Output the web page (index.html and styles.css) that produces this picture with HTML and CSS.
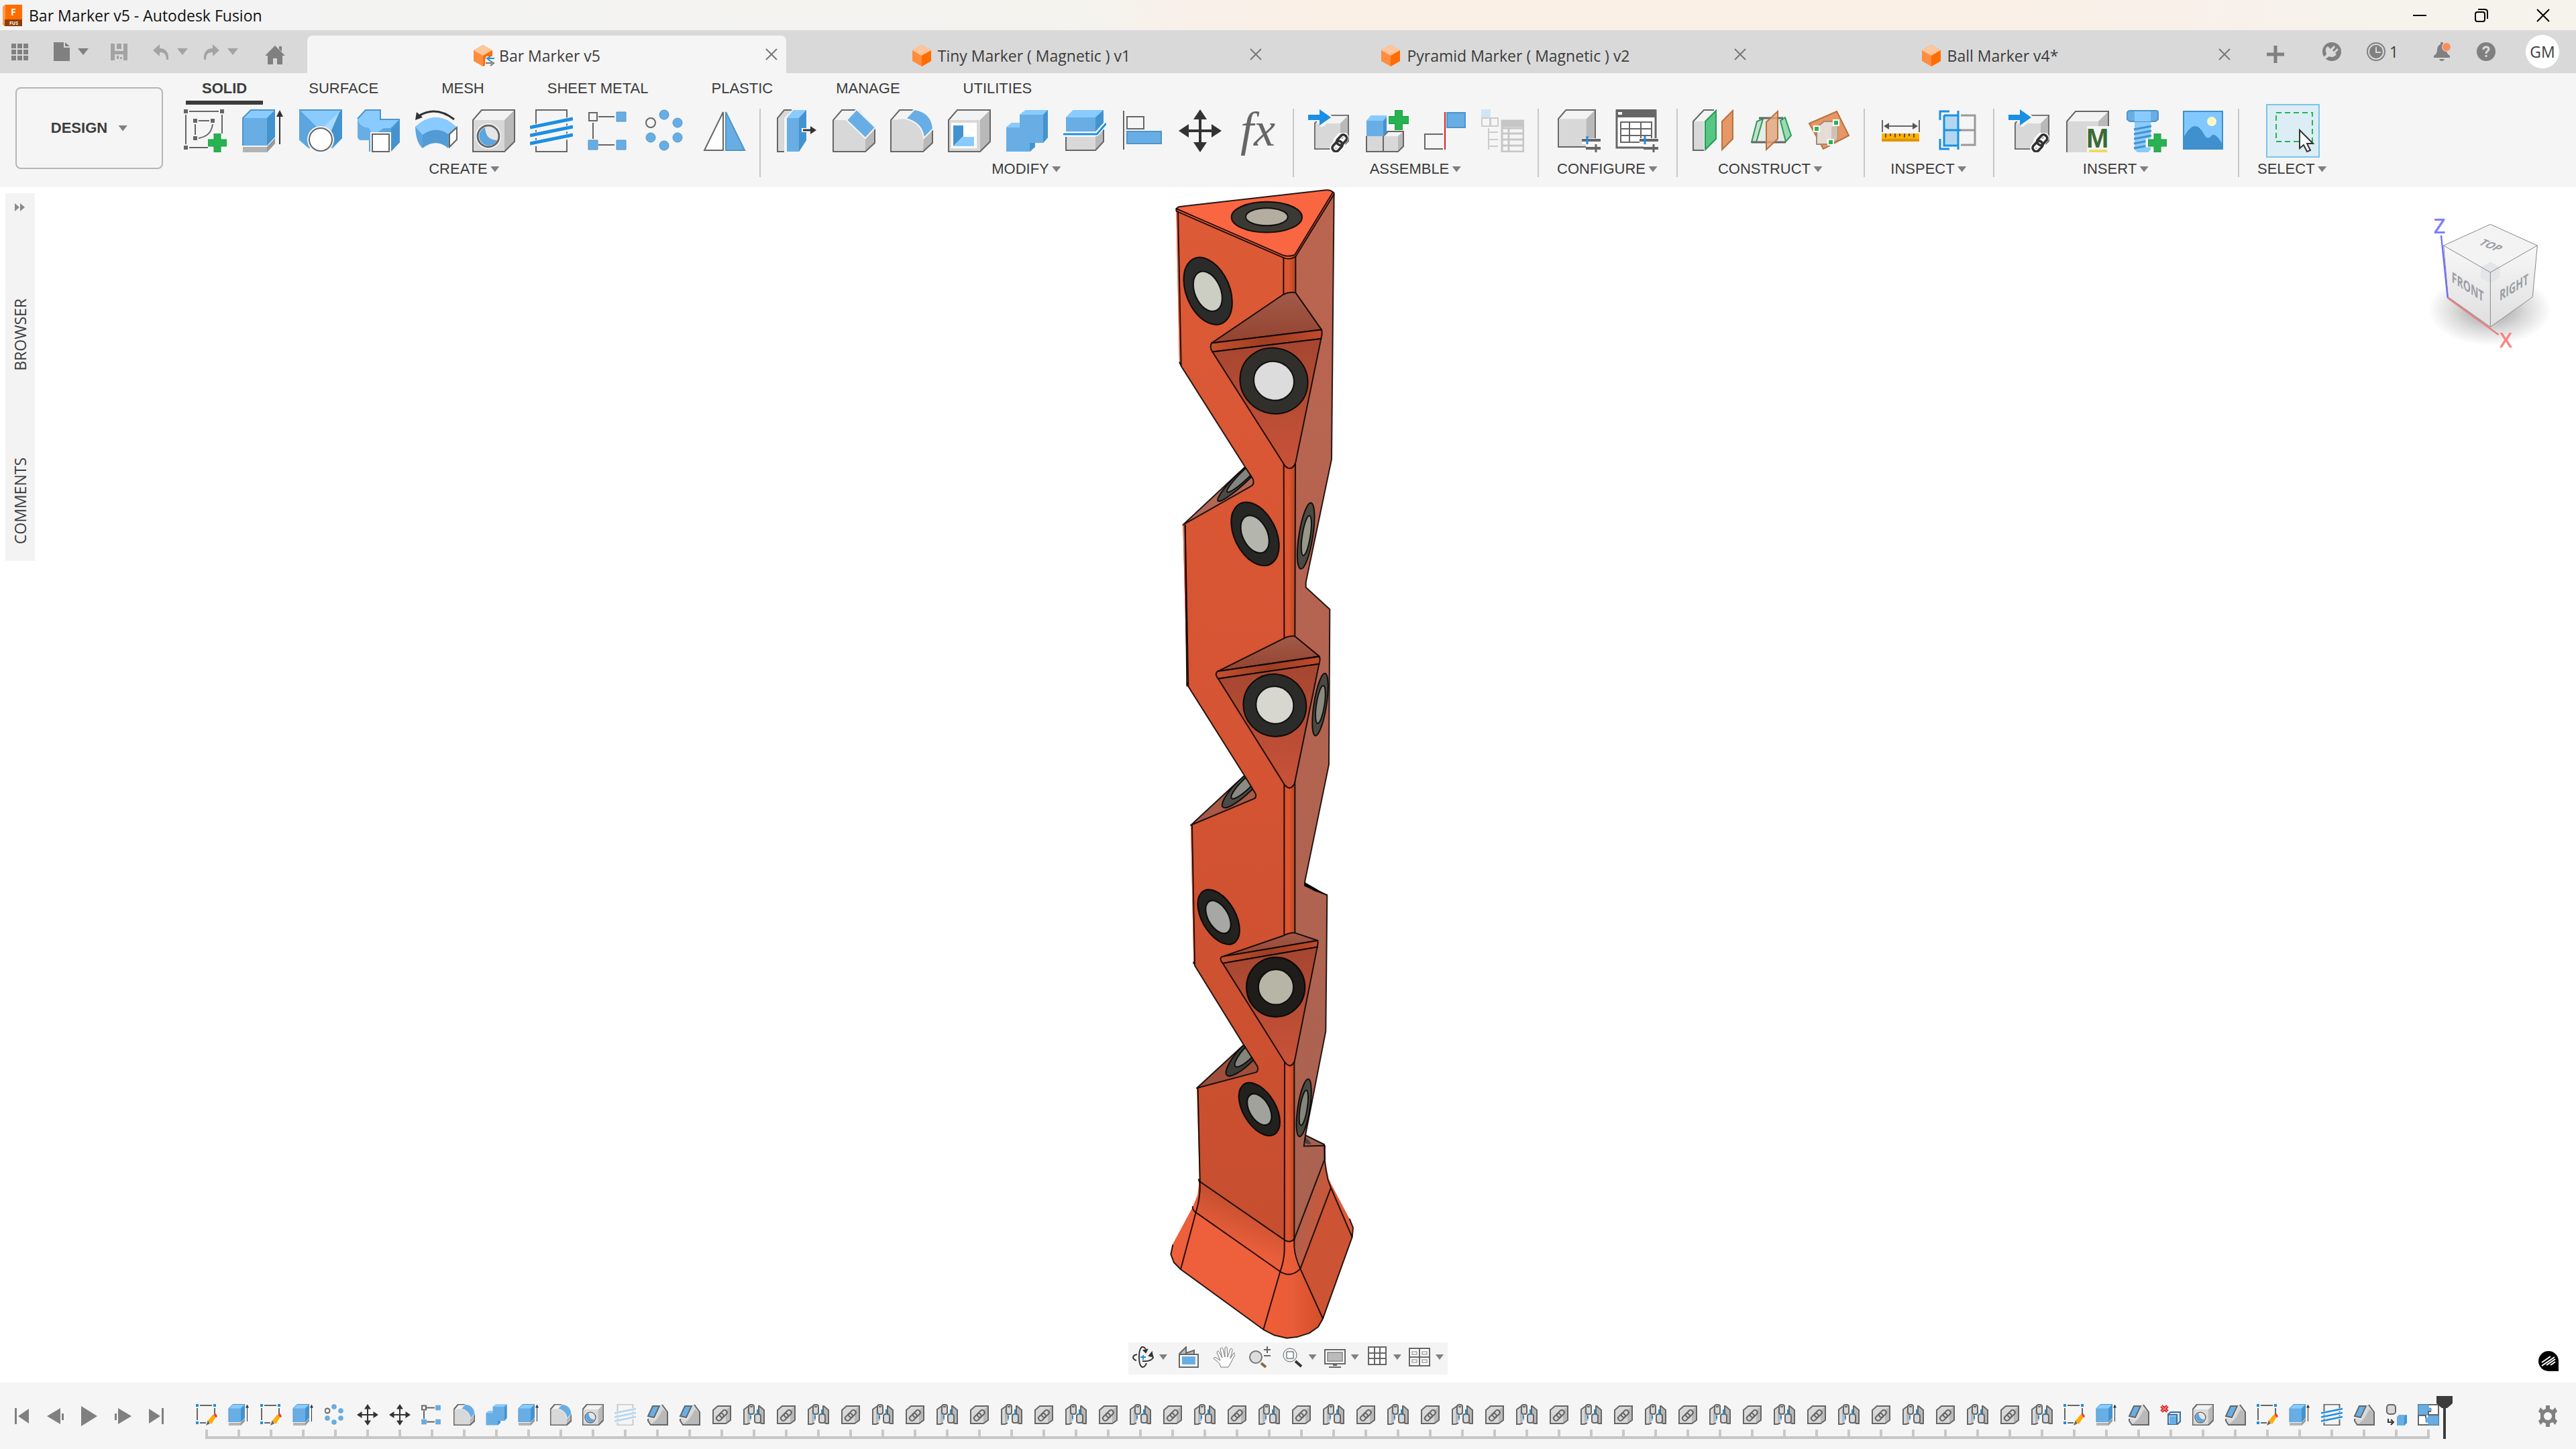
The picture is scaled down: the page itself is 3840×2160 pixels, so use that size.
FILE: index.html
```html
<!DOCTYPE html>
<html lang="en">
<head>
    <meta charset="UTF-8">
    <title>Bar Marker v5 - Autodesk Fusion</title>
    <link rel="stylesheet" href="styles.css">
</head>
<body>
    <!-- Icon sprite -->
    <svg class="sprite" aria-hidden="true">
        <symbol id="doc-cube" viewBox="0 0 32 32">
            <path d="M16 0L30 8V24L16 32L2 24V8z" fill="#ff8d3f"/>
            <path d="M16 0L30 8L16 16L2 8z" fill="#ffc59b"/>
            <path d="M16 16L30 8V24L16 32z" fill="#ff6d00"/>
        </symbol>
        <symbol id="sync" viewBox="0 0 16 16">
            <path d="M3 1H16V16H1V6z" fill="#f5f5f5"/>
            <path d="M15 4H6M9 1L4 4L9 8" stroke="#1a8fe3" stroke-width="2" fill="none"/>
            <path d="M2 11H11M9 8L14 11L9 15" stroke="#777" stroke-width="2" fill="none"/>
        </symbol>
        <symbol id="close" viewBox="0 0 18 18">
            <path d="M1 1L17 17M17 1L1 17" stroke="#777" stroke-width="2" fill="none"/>
        </symbol>

        <!-- Quick access -->
        <symbol id="apps" viewBox="0 0 32 32">
            <path d="M3 4h7v7H3zM12 4h7v7h-7zM21 4h7v7h-7zM3 13h7v7H3zM12 13h7v7h-7zM21 13h7v7h-7zM3 22h7v7H3zM12 22h7v7h-7zM21 22h7v7h-7z" fill="#808080"/>
        </symbol>
        <symbol id="file" viewBox="0 0 32 32">
            <path d="M4 2H19V10H28V30H4zM21 2L28 8H21z" fill="#808080"/>
        </symbol>
        <symbol id="save" viewBox="0 0 32 32">
            <path d="M3 4H9V15H22V4H28V29H3z M12 4H19V12H12zM9 20V29H22V20z" fill="#a3a3a3" fill-rule="evenodd"/>
            <path d="M12 22H15V27H12zM17 24h3v3h-3z" fill="#a3a3a3"/>
        </symbol>
        <symbol id="undo" viewBox="0 0 32 32">
            <path d="M4 14L14 5V11C23 11 28 17 27 28H24C24 20 21 17 14 17V23z" fill="#a3a3a3"/>
        </symbol>
        <symbol id="redo" viewBox="0 0 32 32">
            <path d="M28 14L18 5V11C9 11 4 17 5 28H8C8 20 11 17 18 17V23z" fill="#a3a3a3"/>
        </symbol>
        <symbol id="home" viewBox="0 0 32 32">
            <path d="M16 3L31 18H27V31H19V22H13V31H5V18H1zM22 4h4v8l-4-4z" fill="#808080"/>
        </symbol>

        <!-- Shared blocks -->
        <symbol id="grey-box" viewBox="0 0 64 64">
            <path d="M1 16L14 1H63V48L48 63H1z" fill="#d8d8d8"/>
            <path d="M1 16L14 1H63L48 16z" fill="#f3f3f3"/>
            <path d="M48 16L63 1V48L48 63z" fill="#b9b9b9"/>
            <path d="M1 16L14 1H63V48L48 63H1z" class="ol"/>
        </symbol>
        <symbol id="plus" viewBox="0 0 28 28">
            <path d="M9 0H19V9H28V19H19V28H9V19H0V9H9z" fill="#27b352" stroke="#1c9a42"/>
        </symbol>
        <symbol id="chain" viewBox="0 0 32 32">
            <g fill="none" stroke="#fff" stroke-width="8"><rect x="13" y="1" width="11" height="19" rx="5" transform="rotate(42 18 10)"/><rect x="7" y="11" width="11" height="19" rx="5" transform="rotate(42 12 21)"/></g>
            <g fill="none" stroke="#333" stroke-width="4"><rect x="14" y="2" width="11" height="18" rx="5" transform="rotate(42 19 11)"/><rect x="7" y="12" width="11" height="18" rx="5" transform="rotate(42 12 21)"/></g>
        </symbol>
        <symbol id="in-arrow" viewBox="0 0 34 24">
            <path d="M0 8H17V0L34 12L17 24V16H0z" fill="#1a8fe3"/>
        </symbol>

        <!-- Create -->
        <symbol id="sketch" viewBox="0 0 64 64">
            <path d="M0 0h6v6H0zM54 0h6v6h-6zM0 54h6v6H0zM14 14h6v6h-6zM40 14h6v6h-6zM14 40h6v6h-6z" fill="#666"/>
            <path d="M8 3H52M3 8V52M57 8V36M8 57H36M22 17H38M17 22V38M43 22Q41 40 22 43" class="ol"/>
            <use href="#plus" x="36" y="36" width="28" height="28"/>
        </symbol>
        <symbol id="extrude" viewBox="0 0 64 64">
            <path d="M2 56H38L50 43V51L38 64H2z" fill="#b3b3b3"/>
            <path d="M38 56L50 43V51L38 64z" fill="#999"/>
            <path d="M2 13L14 1H50V41L38 54H2z" fill="#68aee5"/>
            <path d="M2 13L14 1H50L38 13z" fill="#8acbff"/>
            <path d="M38 13L50 1V41L38 54z" fill="#4393cf"/>
            <path d="M2 54V13L14 1H50" fill="none" stroke="#4e94c9" stroke-width="2"/>
            <path d="M57 52V8" stroke="#333" stroke-width="2"/><path d="M57 1L62 11H52z" fill="#333"/>
        </symbol>
        <symbol id="revolve" viewBox="0 0 64 64">
            <path d="M0 1H64V43L50 58H14L0 46z" fill="#68aee5"/>
            <path d="M64 1V43L50 56L34 30z" fill="#4393cf"/>
            <path d="M0 1V44L12 56L30 30z" fill="#5ca5de"/>
            <path d="M2 2H62L34 30H30z" fill="#8acbff"/>
            <path d="M34 28L60 4L46 36z" fill="#a8dbff"/>
            <path d="M0 1H64" stroke="#4e94c9" stroke-width="2"/>
            <circle cx="32" cy="45" r="20" fill="#f5f5f5"/>
            <circle cx="32" cy="45" r="17" fill="#fff" stroke="#666" stroke-width="2"/>
        </symbol>
        <symbol id="sweep" viewBox="0 0 64 64">
            <path d="M1 14L13 1H35V15H63V50L50 63H18V46H6Q1 45 1 40z" fill="#5ca5de"/>
            <path d="M1 14L13 1H35L22 20Q22 24 28 27H50L63 15H35V15z" fill="#8acbff"/>
            <path d="M1 14Q2 26 18 28L22 36H28L40 28H50L63 15H35L34 1H13z" fill="#8acbff"/>
            <path d="M1 14Q2 26 16 28Q20 29 20 36V46H6Q1 45 1 40z" fill="#68aee5"/>
            <path d="M51 30L63 16V50L51 63z" fill="#4393cf"/>
            <path d="M1 14L13 1H35V15H63V50" fill="none" stroke="#4e94c9" stroke-width="2"/>
            <path d="M20 34H51V64H20z" fill="#f5f5f5"/>
            <path d="M23 37H48V63H23z" fill="#fff" stroke="#666" stroke-width="2"/>
        </symbol>
        <symbol id="pipe" viewBox="0 0 64 64">
            <path d="M1 26Q32 -2 62 26L50 58Q32 42 12 58Q2 50 1 26z" fill="#5ca5de"/>
            <path d="M1 26Q32 -2 62 26L50 37Q32 24 12 38z" fill="#8acbff"/>
            <path d="M12 38Q32 24 50 37V57Q32 43 12 57z" fill="#539bd5"/>
            <path d="M52 37L63 27V45L52 56z" fill="#fff" stroke="#666" stroke-width="2"/>
            <path d="M59 15Q32 -6 6 10" fill="none" stroke="#333" stroke-width="3"/>
            <path d="M1 16L3 4L12 12z" fill="#333"/>
        </symbol>
        <symbol id="hole" viewBox="0 0 64 64">
            <use href="#grey-box" width="64" height="64"/>
            <circle cx="24" cy="40" r="19" fill="#fff"/>
            <circle cx="24" cy="40" r="16" fill="#e6e6e6" stroke="#666" stroke-width="3"/>
            <path d="M19 27Q20 46 37 46A14 14 0 1 1 19 27z" fill="#5ca5de"/>
        </symbol>
        <symbol id="thread" viewBox="0 0 64 64">
            <path d="M9 1H55V63H9z" class="ol"/>
            <path d="M0 28L64 15M0 40L64 27M0 52L64 39" stroke="#f5f5f5" stroke-width="9"/>
            <path d="M0 27L64 14M0 39L64 26M0 51L64 38" stroke="#1a8fe3" stroke-width="5"/>
        </symbol>
        <symbol id="rect-pattern" viewBox="3 0 64 64">
            <path d="M5 5h12v12H5zM19 11H43M11 20V44M19 53H43" class="ol"/>
            <path d="M46 4h14v14H46zM4 46h14v14H4zM46 46h14v14H46z" fill="#68aee5" stroke="#4e94c9"/>
        </symbol>
        <symbol id="circ-pattern" viewBox="4 0 64 64">
            <g fill="#68aee5" stroke="#4e94c9"><circle cx="32" cy="8" r="7"/><circle cx="52" cy="20" r="7"/><circle cx="52" cy="42" r="7"/><circle cx="32" cy="54" r="7"/><circle cx="12" cy="42" r="7"/></g>
            <circle cx="12" cy="20" r="7" class="ol"/>
        </symbol>
        <symbol id="mirror" viewBox="0 0 64 64">
            <path d="M30 4V61H2z" fill="#fff" stroke="#666" stroke-width="2"/>
            <path d="M34 4V61H62z" fill="#68aee5" stroke="#4e94c9" stroke-width="2"/>
        </symbol>

        <!-- Modify -->
        <symbol id="press-pull" viewBox="0 0 64 64">
            <path d="M4 13L14 1H26L14 13V63H4z" fill="#d8d8d8"/><path d="M14 63H4V13L14 1H25" class="ol"/>
            <path d="M18 13L28 1H47V46L36 63H18z" fill="#68aee5"/>
            <path d="M18 13L28 1H47L36 13z" fill="#8acbff"/><path d="M36 13L47 1V46L36 63z" fill="#4393cf"/>
            <path d="M40 31H56" stroke="#fff" stroke-width="6"/>
            <path d="M42 31H56" stroke="#333" stroke-width="3"/><path d="M53 25L62 31L53 37z" fill="#333"/>
        </symbol>
        <symbol id="chamfer" viewBox="0 0 64 64">
            <path d="M1 16L14 1H40L63 28V50L49 63H1z" fill="#d8d8d8"/>
            <path d="M1 16L14 1H36L22 16z" fill="#f3f3f3"/>
            <path d="M49 42L63 28V50L49 63z" fill="#b9b9b9"/>
            <path d="M36 1H14L1 16V63H49L63 50V28" class="ol"/>
            <path d="M36 0L64 27L49 43L21 16z" fill="#68aee5" stroke="#f5f5f5" stroke-width="2"/>
        </symbol>
        <symbol id="fillet" viewBox="0 0 64 64">
            <path d="M1 16L14 1H36Q60 4 63 28V50L49 63H1z" fill="#d8d8d8"/>
            <path d="M1 16L14 1H36L24 14z" fill="#f3f3f3"/>
            <path d="M50 42L63 30V50L49 63z" fill="#b9b9b9"/>
            <path d="M36 1H14L1 16V63H49L63 50V30" class="ol"/>
            <path d="M36 0Q62 4 64 29L50 43Q48 20 23 14z" fill="#68aee5" stroke="#f5f5f5" stroke-width="2"/>
        </symbol>
        <symbol id="shell" viewBox="0 0 64 64">
            <use href="#grey-box" width="64" height="64"/>
            <path d="M5 20H43V58H5z" fill="#fff"/>
            <path d="M8 24H23V40L8 55z" fill="#4393cf"/><path d="M8 55L22 41H39V55z" fill="#8acbff"/>
        </symbol>
        <symbol id="combine" viewBox="0 0 64 64">
            <path d="M1 27L9 20H21V8L30 1H63V42L56 50H44V56L36 63H1z" fill="#68aee5"/>
            <path d="M21 8L30 1H63L56 8z" fill="#8acbff"/><path d="M1 27L9 20H21V27z" fill="#8acbff"/>
            <path d="M56 8L63 1V42L56 50zM36 50H44V56L36 63z" fill="#4393cf"/>
        </symbol>
        <symbol id="split" viewBox="0 0 64 64">
            <path d="M4 41H48L60 28V48L48 61H4z" fill="#d8d8d8"/><path d="M48 41L60 28V48L48 61z" fill="#b9b9b9"/>
            <path d="M4 41V61H48L60 48V30" class="ol"/>
            <path d="M4 12L15 1H60V20L48 33H4z" fill="#68aee5"/><path d="M4 12L15 1H60L48 12z" fill="#8acbff"/><path d="M48 12L60 1V20L48 33z" fill="#4393cf"/>
            <path d="M0 37H50L64 21" fill="none" stroke="#fff" stroke-width="6"/><path d="M0 37H50L64 21" fill="none" stroke="#1a8fe3" stroke-width="3"/>
        </symbol>
        <symbol id="align" viewBox="0 0 64 64">
            <path d="M4 2V60M9 11H34V29H9z" class="ol"/>
            <path d="M9 33H60V51H9z" fill="#68aee5" stroke="#4e94c9" stroke-width="2"/>
        </symbol>
        <symbol id="move" viewBox="0 0 64 64">
            <path d="M32 8V56M8 32H56" stroke="#333" stroke-width="4"/>
            <path d="M32 0L42 15H22zM32 64L42 49H22zM0 32L15 22V42zM64 32L49 22V42z" fill="#333"/>
        </symbol>

        <!-- Assemble -->
        <symbol id="derive" viewBox="0 0 64 64">
            <svg x="9" y="8" width="52" height="52" viewBox="0 0 64 64"><use href="#grey-box" width="64" height="64"/></svg>
            <path d="M0 6H18V0H24L38 12L22 26H18V18H0z" fill="#f5f5f5"/>
            <use href="#in-arrow" width="34" height="24"/><use href="#chain" x="31" y="35" width="32" height="30"/>
        </symbol>
        <symbol id="new-component" viewBox="0 0 64 64">
            <path d="M1 40L8 33H56V55L48 63H1z" fill="#d8d8d8"/><path d="M26 40L33 33H56L48 40z" fill="#f3f3f3"/><path d="M48 40L56 33V55L48 63z" fill="#b9b9b9"/>
            <path d="M1 40V63H48L56 55V33H33L26 40V63" class="ol"/>
            <path d="M1 17L8 9H33V31L26 40H1z" fill="#68aee5"/><path d="M1 17L8 9H33L26 17z" fill="#8acbff"/><path d="M26 17L33 9V31L26 40z" fill="#4393cf"/>
            <path d="M31 0H65V32H31z" fill="#f5f5f5"/><use href="#plus" x="34" y="1" width="30" height="30"/>
        </symbol>
        <symbol id="joint" viewBox="0 0 64 64">
            <path d="M29 37H2V59H29" class="ol"/><path d="M32 4V60" stroke="#d3232b" stroke-width="2"/>
            <path d="M35 5H62V27H35z" fill="#68aee5" stroke="#4e94c9" stroke-width="2"/>
        </symbol>
        <symbol id="bom" viewBox="0 0 64 64">
            <path d="M0 0h14v12H0z" fill="#cfe6f5"/><path d="M1 13h12v12H1zM14 13h11v12H14zM11 28V60M11 34H25M11 45H25M11 55H25" fill="none" stroke="#ccc" stroke-width="2"/>
            <path d="M31 17H63V63H31zM31 28H63M31 36H63M31 45H63M31 54H63M41 28V63" fill="none" stroke="#c6c6c6" stroke-width="3"/><path d="M30 16H64V26H30z" fill="#c6c6c6"/>
        </symbol>

        <!-- Configure -->
        <symbol id="sliders" viewBox="0 0 28 24">
            <path d="M0 3H28V12H0zM6 12H28V24H6z" fill="#f5f5f5"/>
            <path d="M0 6H28M6 18H28" stroke="#666" stroke-width="4"/><path d="M8 0V12" stroke="#1a8fe3" stroke-width="3"/><path d="M21 12V24" stroke="#666" stroke-width="3"/>
        </symbol>
        <symbol id="configure" viewBox="0 0 64 64">
            <svg y="0" width="57" height="57" viewBox="0 0 64 64"><use href="#grey-box" width="64" height="64"/></svg>
            <use href="#sliders" x="36" y="40" width="28" height="24"/>
        </symbol>
        <symbol id="config-table" viewBox="0 0 64 64">
            <path d="M2 2H60V57H2z" fill="#fff" stroke="#666" stroke-width="3"/><path d="M1 0H61V12H1z" fill="#666"/><path d="M4 4h6v4H4z" fill="#fff"/>
            <path d="M8 19H54V49H8zM8 29H54M8 39H54M21 19V49M38 19V49" class="ol"/>
            <use href="#sliders" x="36" y="40" width="28" height="24"/>
        </symbol>

        <!-- Construct -->
        <symbol id="offset-plane" viewBox="0 0 64 64">
            <path d="M2 18L18 1H34L18 18V61H2z" fill="#d8d8d8"/><path d="M2 18L18 1H34L18 18z" fill="#f3f3f3"/><path d="M33 1H18L2 18V61H18" class="ol"/>
            <path d="M20 18L36 2V44L20 60z" fill="#55c783" stroke="#2b9a5a" stroke-width="2"/>
            <path d="M45 18L61 2V44L45 60z" fill="#e59766" stroke="#b8703f" stroke-width="2"/>
        </symbol>
        <symbol id="midplane" viewBox="0 0 64 64">
            <path d="M11 18L18 12H50L60 40L52 49H3z" fill="#e3ece6"/><path d="M11 18L3 49H10L20 14z" fill="#c8dfd0" stroke="#2b9a5a" stroke-width="2"/>
            <path d="M46 17L53 12L62 39L54 48z" fill="#9adbb2" stroke="#2b9a5a" stroke-width="2"/><path d="M14 13H50M3 49H54" stroke="#666" stroke-width="3"/>
            <path d="M25 19L42 3V44L25 60z" fill="#e5a57c" fill-opacity=".8" stroke="#b8703f" stroke-width="2"/>
        </symbol>
        <symbol id="plane-points" viewBox="0 0 64 64">
            <path d="M44 3L62 39L24 59L3 21z" fill="#e59766" stroke="#b8703f" stroke-width="2"/>
            <path d="M14 27L25 18H45V44L36 52H14z" fill="#e5dcd6" stroke="#aa8570" stroke-width="2"/><path d="M36 27L45 18V44L36 52z" fill="#d0bfb5"/>
            <path d="M39 16h8v8h-8zM10 25h8v8h-8zM31 45h8v8h-8z" fill="#27b352" stroke="#fff" stroke-width="2"/>
        </symbol>

        <!-- Inspect -->
        <symbol id="measure" viewBox="0 0 64 64">
            <path d="M5 16V34M60 16V34M9 25H56" class="ol"/><path d="M7 25L15 20V30zM58 25L50 20V30z" fill="#555"/>
            <path d="M4 36H60V48H4z" fill="#ffb000"/><path d="M4 44H60V48H4z" fill="#e59400"/>
            <path d="M10 36v6M17 36v4M24 36v6M31 36v4M38 36v6M45 36v4M52 36v6" stroke="#555" stroke-width="2"/>
        </symbol>
        <symbol id="interference" viewBox="0 0 64 64">
            <path d="M10 8H32V54H10z" fill="#b3d7f2"/><path d="M36 9H57V53H36M36 31H57" fill="none" stroke="#999" stroke-width="3"/>
            <path d="M19 3H5V16M5 44V59H19M32 2V60M11 9H32M11 9V54H32M11 31H36" fill="none" stroke="#1a8fe3" stroke-width="3"/>
        </symbol>

        <!-- Insert -->
        <symbol id="bolt" viewBox="0 0 64 64">
            <path d="M16 16H40V60L36 64H20L16 60z" fill="#8acbff"/><path d="M15 30L41 25M15 37L41 32M15 44L41 39M15 51L41 46M15 58L41 53" stroke="#4393cf" stroke-width="3"/>
            <path d="M5 5Q6 2 9 2H48Q51 2 51 5V15L47 18H9L5 15z" fill="#68aee5" stroke="#4e94c9" stroke-width="2"/><path d="M16 3H40V18H16z" fill="#8acbff"/>
            <path d="M45 34H55V45H64V55H55V64H45V55H34V45H45z" fill="#f5f5f5" stroke="#f5f5f5" stroke-width="3"/><use href="#plus" x="36" y="36" width="28" height="28"/>
        </symbol>
        <symbol id="picture" viewBox="0 0 64 64">
            <path d="M3 3H61V59H3z" fill="#80c8ff" stroke="#4090cc" stroke-width="2"/>
            <path d="M3 42Q20 10 34 38Q39 47 46 38Q52 36 61 52V59H3z" fill="#3f90cc"/><circle cx="45" cy="18" r="7" fill="#fff8c4"/>
        </symbol>
        <symbol id="select" viewBox="0 0 64 64">
            <path d="M7 5H61V48H7z" fill="none" stroke="#27b352" stroke-width="2" stroke-dasharray="8 5"/>
            <path d="M42 31V58L48 53L53 63L58 61L53 51H62z" fill="#fff" stroke="#333" stroke-width="2"/>
        </symbol>

        <!-- Timeline only -->
        <symbol id="t-sketch" viewBox="0 0 32 32">
            <path d="M0 0h4v4H0zM26 0h4v4h-4zM0 26h4v4H0z" fill="#1a8fe3"/>
            <path d="M6 2H24M2 6V24M28 6V17M6 28H15" fill="none" stroke="#666" stroke-width="2"/>
            <path d="M15 32L18 24L21 29z" fill="#666"/><path d="M18 25L25 16L30 19L23 30z" fill="#ffab00"/><path d="M26 16L29 14Q32 16 32 19L30 20z" fill="#f03c3c"/>
        </symbol>
        <symbol id="t-chamfer" viewBox="0 0 32 32">
            <path d="M2 20V26L6 31H31V13L23 1H16z" fill="#d8d8d8"/>
            <path d="M6 31L16 22L24 8L31 13V31z" fill="#b9b9b9"/>
            <path d="M2 22V25L6 31H31V12L23 1" class="ol"/>
            <path d="M8 0H22L12 23L0 20z" fill="#f5f5f5"/>
            <path d="M9 3H19L11 20L2 18z" fill="#68aee5" stroke="#666" stroke-width="2"/>
        </symbol>
        <symbol id="t-link" viewBox="0 0 32 32">
            <path d="M3 9L10 3H29V24L22 29H3z" fill="#d8d8d8"/><path d="M22 9L29 3V24L22 29z" fill="#b9b9b9"/><path d="M3 9L10 3H29V24L22 29H3z" class="ol"/>
            <g fill="none" stroke="#666" stroke-width="2"><rect x="15" y="8" width="7" height="12" rx="3" transform="rotate(45 18 14)"/><rect x="10" y="13" width="7" height="12" rx="3" transform="rotate(45 13 19)"/></g>
        </symbol>
        <symbol id="t-joint" viewBox="0 0 32 32">
            <path d="M1 8L9 3V28L6 30H1z" fill="#d8d8d8"/><path d="M6 8L12 5V24L6 28z" fill="#b9b9b9"/><path d="M10 28L6 30H1V8L8 3" class="ol"/>
            <rect x="8" y="1" width="8" height="14" rx="3" fill="#d8d8d8" stroke="#666" stroke-width="2"/><path d="M10 4h4" stroke="#666" stroke-width="2"/>
            <path d="M10 17h2v5h-2zM20 8h2v8h-2z" fill="#1a8fe3"/>
            <path d="M24 3L31 9V29H27L23 26V3z" fill="#b9b9b9" stroke="#666" stroke-width="2"/><rect x="17" y="15" width="9" height="13" rx="3" fill="#d8d8d8" stroke="#666" stroke-width="2"/>
            <path d="M20 8h2v8h-2z" fill="#1a8fe3"/>
        </symbol>
        <symbol id="t-remove" viewBox="0 0 32 32">
            <path d="M2 3L11 11M11 3L2 11" stroke="#c81e1e" stroke-width="5"/><path d="M2 3L11 11M11 3L2 11" stroke="#ff6b6b" stroke-width="2"/>
            <path d="M12 15L16 12H30V26L26 30H12z" fill="#cfeafc" stroke="#3e6d99" stroke-width="2"/><path d="M14 18H25V30H14z" fill="#68aee5"/><path d="M12 16H25V30" fill="none" stroke="#3e6d99" stroke-width="2"/>
        </symbol>
        <symbol id="t-component" viewBox="0 0 32 32">
            <rect x="2" y="1" width="13" height="14" rx="4" fill="#d8d8d8" stroke="#666" stroke-width="2"/><path d="M4 22V27H10M8 23L12 27L8 31" fill="none" stroke="#333" stroke-width="2"/>
            <path d="M17 19L20 16H32V28L28 32H17z" fill="#68aee5"/><path d="M28 19L32 16V28L28 32z" fill="#4393cf"/>
        </symbol>
        <symbol id="t-pattern" viewBox="0 0 32 32">
            <path d="M1 1H31V31H1z" fill="#fff" stroke="#666" stroke-width="2"/>
            <path d="M1 1H16V6H20V11H16V16H1zM16 17H31V31H16V27H12V21H16z" fill="#68aee5" stroke="#4e94c9"/><path d="M1 17H12V21M20 11H16V16H31" class="ol"/>
        </symbol>
    </svg>

    <header class="title-bar">
        <svg class="app-logo" viewBox="0 0 32 32">
            <path d="M1 3L5 0H30V32H4L1 29z" fill="#ff6d00"/><path d="M1 3L5 0V32L1 28z" fill="#ff9a4d"/><path d="M4 22H30V32H4z" fill="#8f3d06"/>
            <text x="13" y="16" class="logo-f">F</text><text x="11" y="30" class="logo-fus">FUS</text>
        </svg>
        <h1 class="window-title">Bar Marker v5 - Autodesk Fusion</h1>
        <div class="window-controls">
            <button aria-label="Minimize"><svg viewBox="0 0 20 20"><path d="M0 10H20" stroke="#000" stroke-width="2"/></svg></button>
            <button aria-label="Restore"><svg viewBox="0 0 20 20" fill="none" stroke="#000" stroke-width="2"><rect x="1" y="5" width="14" height="14" rx="3"/><path d="M5 1H15Q19 1 19 5V15"/></svg></button>
            <button aria-label="Close"><svg viewBox="0 0 20 20"><path d="M1 1L19 19M19 1L1 19" stroke="#000" stroke-width="2"/></svg></button>
        </div>
    </header>

    <div class="tab-bar">
        <div class="quick-access">
            <button aria-label="Show data panel"><svg><use href="#apps"/></svg></button>
            <button class="with-caret" aria-label="File"><svg><use href="#file"/></svg><i class="caret"></i></button>
            <button aria-label="Save"><svg><use href="#save"/></svg></button>
            <div class="history">
                <button class="with-caret faded" aria-label="Undo"><svg><use href="#undo"/></svg><i class="caret"></i></button>
                <button class="with-caret faded" aria-label="Redo"><svg><use href="#redo"/></svg><i class="caret"></i></button>
            </div>
            <button class="home" aria-label="Home"><svg><use href="#home"/></svg></button>
        </div>
        <nav class="documents">
            <div class="document active">
                <button class="document-name"><span class="doc-icon"><svg><use href="#doc-cube"/></svg><svg class="sync"><use href="#sync"/></svg></span>Bar Marker v5</button>
                <button class="document-close" aria-label="Close Bar Marker"><svg><use href="#close"/></svg></button>
            </div>
            <div class="document">
                <button class="document-name"><span class="doc-icon"><svg><use href="#doc-cube"/></svg></span>Tiny Marker ( Magnetic ) v1</button>
                <button class="document-close" aria-label="Close Tiny Marker"><svg><use href="#close"/></svg></button>
            </div>
            <div class="document">
                <button class="document-name"><span class="doc-icon"><svg><use href="#doc-cube"/></svg></span>Pyramid Marker ( Magnetic ) v2</button>
                <button class="document-close" aria-label="Close Pyramid Marker"><svg><use href="#close"/></svg></button>
            </div>
            <div class="document">
                <button class="document-name"><span class="doc-icon"><svg><use href="#doc-cube"/></svg></span>Ball Marker v4*</button>
                <button class="document-close" aria-label="Close Ball Marker"><svg><use href="#close"/></svg></button>
            </div>
        </nav>
        <button class="new-tab" aria-label="New design"><svg viewBox="0 0 32 32"><path d="M16 3V29M3 16H29" stroke="#808080" stroke-width="5"/></svg></button>
        <div class="status">
            <button aria-label="Extensions"><svg viewBox="0 0 28 28"><circle cx="14" cy="14" r="14" fill="#808080"/><path d="M5 9L8 6L12 10L17 5L19 7L15 12L17 14L22 9L24 11L19 16L21 18Q16 24 10 21L3 26L2 22L6 18Q4 13 5 9z" fill="#d9d9d9"/></svg></button>
            <button class="jobs" aria-label="Job status 1"><svg viewBox="0 0 28 28"><circle cx="14" cy="14" r="13" fill="none" stroke="#808080" stroke-width="2"/><circle cx="14" cy="14" r="10" fill="#808080"/><path d="M14 7V15H21" fill="none" stroke="#d9d9d9" stroke-width="2"/></svg>1</button>
            <button aria-label="Notifications"><svg viewBox="0 0 28 28"><path d="M12 0H16V3Q21 5 21 12Q21 17 26 20V23H2V20Q7 17 7 12Q7 5 12 3zM10 25H18Q17 28 14 28Q11 28 10 25z" fill="#808080"/><circle cx="21" cy="7" r="7" fill="#d9d9d9"/><circle cx="21" cy="7" r="6" fill="#ff8c57"/></svg></button>
            <button aria-label="Help"><svg viewBox="0 0 28 28"><circle cx="14" cy="14" r="14" fill="#808080"/><path d="M10 11Q10 7 14 7Q18 7 18 10Q18 12 15 14Q14 15 14 17M14 19V22" fill="none" stroke="#d9d9d9" stroke-width="3"/></svg></button>
            <button class="avatar">GM</button>
        </div>
    </div>

    <section class="ribbon">
        <button class="workspace">DESIGN<i class="caret"></i></button>
        <div class="ribbon-main">
            <nav class="ribbon-tabs">
                <button class="active">SOLID</button>
                <button>SURFACE</button>
                <button>MESH</button>
                <button>SHEET METAL</button>
                <button>PLASTIC</button>
                <button>MANAGE</button>
                <button>UTILITIES</button>
            </nav>
            <div class="groups">
                <div class="group">
                    <div class="tools">
                        <button aria-label="Create sketch"><svg><use href="#sketch"/></svg></button>
                        <button aria-label="Extrude"><svg><use href="#extrude"/></svg></button>
                        <button aria-label="Revolve"><svg><use href="#revolve"/></svg></button>
                        <button aria-label="Sweep"><svg><use href="#sweep"/></svg></button>
                        <button aria-label="Bend"><svg><use href="#pipe"/></svg></button>
                        <button aria-label="Hole"><svg><use href="#hole"/></svg></button>
                        <button aria-label="Thread"><svg><use href="#thread"/></svg></button>
                        <button aria-label="Rectangular pattern"><svg><use href="#rect-pattern"/></svg></button>
                        <button aria-label="Circular pattern"><svg><use href="#circ-pattern"/></svg></button>
                        <button aria-label="Mirror"><svg><use href="#mirror"/></svg></button>
                    </div>
                    <button class="group-label">CREATE<i class="caret"></i></button>
                </div>
                <div class="group">
                    <div class="tools">
                        <button aria-label="Press pull"><svg><use href="#press-pull"/></svg></button>
                        <button aria-label="Chamfer"><svg><use href="#chamfer"/></svg></button>
                        <button aria-label="Fillet"><svg><use href="#fillet"/></svg></button>
                        <button aria-label="Shell"><svg><use href="#shell"/></svg></button>
                        <button aria-label="Combine"><svg><use href="#combine"/></svg></button>
                        <button aria-label="Split body"><svg><use href="#split"/></svg></button>
                        <button aria-label="Align"><svg><use href="#align"/></svg></button>
                        <button aria-label="Move"><svg><use href="#move"/></svg></button>
                        <button class="parameters" aria-label="Change parameters">fx</button>
                    </div>
                    <button class="group-label">MODIFY<i class="caret"></i></button>
                </div>
                <div class="group">
                    <div class="tools">
                        <button aria-label="Insert component"><svg><use href="#derive"/></svg></button>
                        <button aria-label="New component"><svg><use href="#new-component"/></svg></button>
                        <button aria-label="Joint"><svg><use href="#joint"/></svg></button>
                        <button aria-label="Bill of materials" disabled><svg><use href="#bom"/></svg></button>
                    </div>
                    <button class="group-label">ASSEMBLE<i class="caret"></i></button>
                </div>
                <div class="group">
                    <div class="tools">
                        <button aria-label="Configure"><svg><use href="#configure"/></svg></button>
                        <button aria-label="Configuration table"><svg><use href="#config-table"/></svg></button>
                    </div>
                    <button class="group-label">CONFIGURE<i class="caret"></i></button>
                </div>
                <div class="group">
                    <div class="tools">
                        <button aria-label="Offset plane"><svg><use href="#offset-plane"/></svg></button>
                        <button aria-label="Midplane"><svg><use href="#midplane"/></svg></button>
                        <button aria-label="Plane through points"><svg><use href="#plane-points"/></svg></button>
                    </div>
                    <button class="group-label">CONSTRUCT<i class="caret"></i></button>
                </div>
                <div class="group">
                    <div class="tools">
                        <button aria-label="Measure"><svg><use href="#measure"/></svg></button>
                        <button aria-label="Interference"><svg><use href="#interference"/></svg></button>
                    </div>
                    <button class="group-label">INSPECT<i class="caret"></i></button>
                </div>
                <div class="group">
                    <div class="tools">
                        <button aria-label="Insert derive"><svg><use href="#derive"/></svg></button>
                        <button aria-label="Insert McMaster-Carr component"><svg viewBox="0 0 64 64">
                            <svg y="2" width="56" height="56" viewBox="0 0 64 64"><use href="#grey-box" width="64" height="64"/></svg>
                            <path d="M31 25H64V64H31z" fill="#f5f5f5"/>
                            <text x="30" y="57" class="m-text">M</text><path d="M34 60H61V64H34z" fill="#f0d965"/>
                        </svg></button>
                        <button aria-label="Insert fastener"><svg><use href="#bolt"/></svg></button>
                        <button aria-label="Canvas"><svg><use href="#picture"/></svg></button>
                    </div>
                    <button class="group-label">INSERT<i class="caret"></i></button>
                </div>
                <div class="group">
                    <div class="tools">
                        <button class="selected" aria-label="Select"><svg><use href="#select"/></svg></button>
                    </div>
                    <button class="group-label">SELECT<i class="caret"></i></button>
                </div>
            </div>
        </div>
    </section>

    <main class="viewport">
        <svg class="model" viewBox="40 19 290 1721" role="img" aria-label="Bar Marker model">
            <defs>
                <linearGradient id="g-left" x1="0" y1="0" x2="0" y2="1"><stop offset="0" stop-color="#dd5a36"/><stop offset=".5" stop-color="#d55433"/><stop offset="1" stop-color="#c64e2f"/></linearGradient>
                <linearGradient id="g-right" x1="0" y1="0" x2="0" y2="1"><stop offset="0" stop-color="#bb6550"/><stop offset="1" stop-color="#aa6251"/></linearGradient>
                <linearGradient id="g-edge"><stop offset="0" stop-color="#da5430"/><stop offset=".45" stop-color="#dd5630"/><stop offset="1" stop-color="#b44523"/></linearGradient>
                <linearGradient id="g-tri" x1="0" y1="0" x2="0" y2="1"><stop offset="0" stop-color="#a54630"/><stop offset="1" stop-color="#c85238"/></linearGradient>
                <linearGradient id="g-roof" x1="0" y1="0" x2="0" y2="1"><stop offset="0" stop-color="#a25a49"/><stop offset="1" stop-color="#93432f"/></linearGradient>
                <linearGradient id="g-band" x1="0" y1="0" x2="1" y2="0"><stop offset="0" stop-color="#c4502e"/><stop offset=".5" stop-color="#9e3d22"/><stop offset="1" stop-color="#c24a2a"/></linearGradient>
                <linearGradient id="g-fillet" x1=".6" y1=".3" x2=".45" y2=".7"><stop offset="0" stop-color="#c85030"/><stop offset="1" stop-color="#ea5e3a"/></linearGradient>
                <linearGradient id="g-fillet-right" x1="0" y1=".4" x2="1" y2=".8"><stop offset="0" stop-color="#ad6250"/><stop offset="1" stop-color="#d25433"/></linearGradient>
                <linearGradient id="g-corner"><stop offset="0" stop-color="#f05f35"/><stop offset=".5" stop-color="#e85c38"/><stop offset="1" stop-color="#d24e28"/></linearGradient>
                <clipPath id="c-n1"><path d="M468 1068L503 1112L505 1125L498 1137L190 1280z"/></clipPath>
                <clipPath id="c-n2"><path d="M465 2195L515 2262L517 2272L510 2280L225 2377z"/></clipPath>
                <clipPath id="c-n3"><path d="M462 3179L523 3257L526 3267L518 3279L252 3337z"/></clipPath>
            </defs>
            <g transform="scale(.33333 .40816)">
                <!-- Foot -->
                <path fill="#ee5f3b" d="M264 3674L255 3729L232 3774L143 3909L136 3944L150 3974L180 3999L550 4219L625 4007L660 3900z"/>
                <path fill="#cc5334" d="M715 3997L816 4179L947 3881L852 3701z"/>
                <path fill="#df5c3d" d="M824 3599L830 3639L852 3686L935 3814L951 3847L947 3881L852 3701z"/>
                <path fill="url(#g-fillet)" d="M260 3674L640 3889L644 3929L625 4007L248 3791L264 3729z"/>
                <path fill="url(#g-fillet-right)" d="M688 3889L823 3599L830 3645L852 3701L715 3997L692 3929z"/>
                <path fill="url(#g-corner)" d="M644 3880H688L692 3929L715 3997L816 4179L795 4209L755 4232L705 4245L655 4250L597 4239L550 4219L625 4007L637 3969L643 3929z"/>

                <!-- Body -->
                <path fill="url(#g-left)" d="M160 130L640 300L666 3900L640 3889L264 3674L252 3337L518 3279L526 3267L523 3257L462 3179L243 2890L238 2880L225 2377L510 2280L517 2272L515 2262L465 2195L215 1873L208 1855L190 1280L500 1137L505 1125L503 1112L468 1068L182 700L174 685z"/>
                <path fill="#ed6a49" d="M160 130L168 134L182 690L174 685zM190 1280L200 1280L214 1870L208 1855zM225 2377L232 2377L243 2888L238 2880z"/>
                <path fill="url(#g-right)" d="M690 300L866 70L855 1040L740 1490V1508L847 1588L843 2155L735 2585V2597L835 2632L829 3129L738 3509L731 3549L824 3547L823 3599L688 3890z"/>
                <path fill="url(#g-edge)" d="M640 300L694 300L691 2000L688 3895L666 3901L644 3893L643 2000z"/>
                <path fill="#fa6641" d="M160 125L172 118L830 57Q852 55 866 68L864 76L692 302Q662 315 640 304L160 134z"/>
                <path fill="#a8604e" d="M738 3509L825 3544L824 3547L731 3549z"/>
                <path fill="#000" d="M735 2585L835 2632L780 2618L735 2599z"/>
                <path fill="#45453e" d="M734 3516Q758 3528 763 3542Q745 3543 732 3534z"/>

                <!-- Left notches -->
                <g fill="#b26654">
                    <path d="M468 1068L503 1112L505 1125L498 1137L190 1280z"/>
                    <path d="M465 2195L515 2262L517 2272L510 2280L225 2377z" fill="#a85a47"/>
                    <path d="M462 3179L523 3257L526 3267L518 3279L252 3337z" fill="#9d4f3b"/>
                </g>
                <g class="edge" fill="#4a4a46">
                    <g clip-path="url(#c-n1)"><ellipse rx="157" ry="24" transform="translate(470 1095) rotate(-38)"/><ellipse rx="104" ry="17" fill="#84857e" transform="translate(470 1095) rotate(-38)"/></g>
                    <g clip-path="url(#c-n2)"><ellipse rx="137" ry="32" transform="translate(475 2225) rotate(-38)"/><ellipse rx="86" ry="20" fill="#8b8b84" transform="translate(475 2225) rotate(-38)"/></g>
                    <g clip-path="url(#c-n3)" fill="#3a3a36"><ellipse rx="130" ry="36" transform="translate(485 3205) rotate(-40)"/><ellipse rx="80" ry="23" fill="#84847d" transform="translate(485 3205) rotate(-40)"/></g>
                </g>

                <!-- Outlines -->
                <g class="edge" fill="none">
                    <path d="M160 134V125L172 118L830 57Q852 55 866 68L855 1040L740 1490V1508L847 1588L843 2155L735 2585V2597L835 2632L829 3129L738 3509L731 3549L824 3547V3599"/>
                    <path d="M738 3509L825 3544M160 125L640 296Q665 302 690 294L860 66M160 134L640 304Q668 314 694 300L866 72"/>
                    <path d="M168 134L182 700L468 1068L503 1112Q510 1130 498 1137L190 1280L468 1068M200 1280L208 1870M182 700L174 685"/>
                    <path d="M200 1280L214 1870L465 2195L515 2262Q520 2277 508 2280L225 2377L465 2195M208 1855L214 1872M231 2377L243 2890L462 3179L523 3257Q530 3272 518 3279L252 3337L462 3179M238 2875V2884M257 3337L266 3674V3700Q266 3740 248 3791L180 3999"/>
                    <path d="M640 304V438M694 300V432M641 1056L643 1697M693 1056L691 1687M643 2227V2780M691 2217V2770M645 3240L644 3929Q642 3970 625 4007L550 4219M688 3236V3915Q690 3950 715 3997L816 4179"/>
                    <path d="M260 3668L262 3676L640 3889Q665 3906 688 3889L823 3599M234 3768Q230 3780 248 3791L625 4007Q672 4032 715 3997L852 3701M824 3547Q820 3640 852 3701L947 3881"/>
                    <path d="M145 3909L136 3944L150 3974L180 3999L550 4219L597 4239L655 4250L705 4245L755 4232L795 4209L816 4179L947 3881L951 3847L935 3814"/>
                </g>

                <!-- Front pockets -->
                <g class="edge">
                    <path fill="url(#g-roof)" d="M318 616L640 438Q665 428 694 432L810 567z"/>
                    <path fill="url(#g-band)" d="M318 616L810 567Q815 580 808 600L322 648Q308 632 318 616z"/>
                    <path fill="url(#g-tri)" d="M322 648L808 600L694 1052Q685 1074 666 1074Q650 1072 640 1056z"/>
                    <path fill="url(#g-roof)" d="M345 1815L640 1695Q665 1684 691 1687L800 1760z"/>
                    <path fill="url(#g-band)" d="M345 1815L800 1761Q806 1770 799 1788L348 1842Q330 1825 345 1815z"/>
                    <path fill="url(#g-tri)" d="M348 1842L799 1788L691 2218Q684 2241 665 2241Q652 2238 643 2227z"/>
                    <path fill="url(#g-roof)" d="M365 2857L640 2780Q668 2768 691 2770L793 2798z"/>
                    <path fill="url(#g-band)" d="M365 2857L793 2798Q796 2808 791 2822L368 2881Q350 2864 365 2857z"/>
                    <path fill="url(#g-tri)" d="M368 2881L791 2822L690 3236Q682 3255 666 3255Q654 3252 644 3240z"/>
                </g>

                <!-- Magnets -->
                <g class="edge" fill="#2b2b29">
                    <ellipse rx="158" ry="56" cx="565" cy="156" fill="#3a3934"/><ellipse rx="94" ry="32" cx="565" cy="155" fill="#b3ae9f"/>
                    <ellipse rx="135" ry="93" transform="translate(302 426) rotate(55)"/><ellipse rx="80" ry="55" fill="#cccec3" transform="translate(301 427) rotate(55)"/>
                    <ellipse rx="152" ry="120" transform="translate(597 754) rotate(6)" fill="#302f2c"/><ellipse rx="90" ry="71" fill="#dcdcdd" transform="translate(597 754) rotate(6)"/>
                    <ellipse rx="131" ry="88" transform="translate(513 1313) rotate(51)" fill="#262624"/><ellipse rx="77" ry="52" fill="#b4b5ad" transform="translate(512 1314) rotate(51)"/>
                    <ellipse rx="141" ry="114" transform="translate(601 1939) rotate(4)"/><ellipse rx="84" ry="68" fill="#d7d7d0" transform="translate(601 1938) rotate(4)"/>
                    <ellipse rx="118" ry="70" transform="translate(350 2712) rotate(49)" fill="#22221f"/><ellipse rx="70" ry="42" fill="#a7a8a3" transform="translate(348 2712) rotate(49)"/>
                    <ellipse rx="131" ry="109" cx="605" cy="2968" fill="#1e1d1a"/><ellipse rx="78" ry="64" cx="606" cy="2968" fill="#b7b5a6"/>
                    <ellipse rx="115" ry="68" transform="translate(532 3414) rotate(48)" fill="#21211f"/><ellipse rx="67" ry="41" fill="#a1a29b" transform="translate(532 3415) rotate(48)"/>
                </g>
                <g class="edge" fill="#4a4a43">
                    <ellipse rx="123" ry="31" transform="translate(740 1320) rotate(-79)"/><ellipse rx="74" ry="18" fill="#989789" transform="translate(742 1319) rotate(-79)"/>
                    <ellipse rx="116" ry="28" transform="translate(804 1936) rotate(-79)"/><ellipse rx="70" ry="18" fill="#8b8980" transform="translate(805 1936) rotate(-79)"/>
                    <ellipse rx="107" ry="27" transform="translate(731 3409) rotate(-79)"/><ellipse rx="65" ry="16" fill="#87867c" transform="translate(730 3409) rotate(-79)"/>
                </g>
            </g>
        </svg>

        <svg class="view-cube" viewBox="0 0 780 780" role="img" aria-label="View cube">
            <defs>
                <radialGradient id="g-shadow"><stop offset="0" stop-color="#000" stop-opacity=".4"/><stop offset=".6" stop-color="#000" stop-opacity=".14"/><stop offset="1" stop-color="#000" stop-opacity="0"/></radialGradient>
                <linearGradient id="g-cube" x1="0" y1="0" x2="0" y2="1"><stop offset="0" stop-color="#f7f7f7"/><stop offset="1" stop-color="#dfdfdf"/></linearGradient>
            </defs>
            <ellipse cx="395" cy="515" rx="275" ry="160" fill="url(#g-shadow)"/>
            <path d="M188 228L397 348V592L208 458z" fill="url(#g-cube)"/>
            <path d="M607 228L397 348V592L586 458z" fill="url(#g-cube)"/>
            <path d="M397 133L607 228L397 348L188 228z" fill="#f3f3f3"/>
            <path d="M397 301L440 325V372L397 397L354 372V325z" fill="#e3e5e8"/>
            <path d="M397 133L607 228L586 458L397 592L208 458L188 228zM188 228L397 348L607 228M397 348V592" fill="none" stroke="#888" stroke-width="3"/>
            <path d="M177 183L206 462" stroke="#6d6dff" stroke-width="7"/>
            <path d="M206 462L434 627" stroke="#e88080" stroke-width="8"/>
            <text class="cube-face" transform="matrix(.66 .42 0 1 224 390)">FRONT</text>
            <text class="cube-face" transform="matrix(.66 -.4 0 1 438 476)">RIGHT</text>
            <text class="cube-face" transform="matrix(.68 .28 -.66 .5 341 221)">TOP</text>
            <text x="143" y="174" class="axis-z">Z</text>
            <text x="438" y="684" class="axis-x">X</text>
        </svg>

        <aside class="palette">
            <button class="expand" aria-label="Expand panels"><svg viewBox="0 0 16 12"><path d="M0 0L7 6L0 12zM8 0L15 6L8 12z" fill="#8a8a8a"/></svg></button>
            <button class="palette-tab">BROWSER</button>
            <button class="palette-tab">COMMENTS</button>
        </aside>

        <div class="nav-bar">
            <button class="with-caret" aria-label="Orbit"><svg viewBox="0 0 32 32" fill="none" stroke="#333" stroke-width="2"><path d="M20 4Q17 0 14 1Q10 4 10 16Q10 29 15 31Q19 31 21 25M7 12Q1 13 1 17Q2 20 6 21M26 12Q31 14 31 17Q27 23 15 22"/><path d="M17 6L22 5L20 9zM29 9L25 14L30 15z" fill="#333"/><path d="M16 13V20M12 16H20" stroke="#1a8fe3" stroke-width="2"/></svg><i class="caret"></i></button>
            <button class="plain" aria-label="Look at"><svg viewBox="0 0 32 32"><path d="M2 11L12 1V10L24 6V11" fill="#bbb" stroke="#666" stroke-width="2"/><path d="M2 12H30V31H2z" fill="#fff" stroke="#666" stroke-width="2"/><path d="M6 15H26V27H6z" fill="#68aee5"/></svg></button>
            <button class="plain" aria-label="Pan"><svg viewBox="0 0 32 32"><path d="M11 31Q10 25 5 22L0 18Q1 15 4 17L10 21L5 9Q6 5 8 8L13 17L10 4Q12 0 14 4L17 16L17 2Q19 -1 20 2L21 16L25 4Q28 2 28 6L25 18L30 10Q33 9 32 12L25 26L22 31z" fill="#fff" stroke="#777"/></svg></button>
            <button class="plain" aria-label="Zoom"><svg viewBox="0 0 32 32"><circle cx="10" cy="16" r="9" fill="#ddd" stroke="#777" stroke-width="2"/><path d="M18 25L25 31" stroke="#8a6a42" stroke-width="4"/><path d="M27 0V10M22 5H32M22 14H32" stroke="#666" stroke-width="2"/></svg></button>
            <button class="with-caret" aria-label="Fit"><svg viewBox="0 0 32 32"><path d="M20 22L29 30" stroke="#333" stroke-width="4"/><circle cx="12" cy="13" r="10" fill="#eef6fa" stroke="#666" stroke-width="1"/><path d="M7 8H17V18H7z" fill="#fff" stroke="#444" stroke-width="1"/></svg><i class="caret"></i></button>
            <button class="with-caret" aria-label="Display settings"><svg viewBox="0 0 32 32"><path d="M1 5H31V26H1z" fill="#fff" stroke="#666" stroke-width="2"/><path d="M5 9H27V22H5z" fill="#bbb" stroke="#999" stroke-width="2"/><path d="M13 28H19M7 31H25" stroke="#666" stroke-width="2"/></svg><i class="caret"></i></button>
            <button class="with-caret" aria-label="Grid and snaps"><svg viewBox="0 0 32 32"><path d="M3 1H29V27H3zM3 10H29M3 18H29M12 1V27M20 1V27" fill="#fff" stroke="#666" stroke-width="2"/></svg><i class="caret"></i></button>
            <button class="with-caret" aria-label="Viewports"><svg viewBox="0 0 32 32"><path d="M1 3H31V29H1zM16 3V29M1 16H31" fill="#fff" stroke="#666" stroke-width="2"/><path d="M5 8H12V12H5zM20 8H27V12H20zM5 20H12V24H5zM20 20H27V24H20z" fill="#fff" stroke="#bbb" stroke-width="2"/></svg><i class="caret"></i></button>
        </div>

        <button class="assistant" aria-label="Assistant"><svg viewBox="0 0 30 30"><path d="M15 0A15 15 0 0 1 30 15V30H15A15 15 0 0 1 15 0z" fill="#000"/><path d="M5 17L18 8M5 22L24 9M12 21L25 12M18 21L25 16" stroke="#fff" stroke-width="2"/></svg></button>
    </main>

    <footer class="timeline">
        <div class="playback">
            <button aria-label="Go to start"><svg viewBox="0 0 32 32"><path d="M5 4H8V28H5zM26 5V27L10 16z" fill="#808080"/></svg></button>
            <button aria-label="Step back"><svg viewBox="0 0 32 32"><path d="M3 16L23 4V28zM25 12H28V22H25z" fill="#808080"/></svg></button>
            <button aria-label="Play"><svg viewBox="0 0 32 32"><path d="M4 1L28 16L4 31z" fill="#808080"/></svg></button>
            <button aria-label="Step forward"><svg viewBox="0 0 32 32"><path d="M29 16L9 4V28zM4 12H7V22H4z" fill="#808080"/></svg></button>
            <button aria-label="Go to end"><svg viewBox="0 0 32 32"><path d="M24 4H27V28H24zM5 5V27L22 16z" fill="#808080"/></svg></button>
        </div>
        <div class="track">
            <ol class="features" id="features"></ol>
            <div class="track-line"></div>
            <svg class="playhead" viewBox="0 0 24 64"><path d="M0 0H24V11L16 18H14V64H10V18H8L0 11z" fill="#3c3c3c"/></svg>
        </div>
        <button class="settings" aria-label="Timeline settings"><svg viewBox="0 0 32 32"><path d="M13 0H19V5L23 7L27 3L30 9L27 12V20L30 23L27 29L23 25L19 27V32H13V27L9 25L5 29L2 23L5 20V12L2 9L5 3L9 7L13 5z" fill="#808080"/><circle cx="16" cy="16" r="6" fill="#f5f5f5"/></svg></button>
    </footer>

    <script src="script.js"></script>
</body>
</html>
```
FILE: styles.css
```css
* {
    box-sizing: border-box;
}
body {
    margin: 0;
    height: 100vh;
    display: flex;
    flex-direction: column;
    overflow: hidden;
    background-color: #fff;
    color: #3c3c3c;
    font-family: "Liberation Sans", Arial, sans-serif;
    font-size: 22px;
}
button {
    margin: 0;
    padding: 0;
    border: none;
    background: none;
    color: inherit;
    font: inherit;
    cursor: pointer;
    display: flex;
    align-items: center;
    justify-content: center;
}
svg {
    display: block;
    flex: none;
}
.sprite {
    position: absolute;
    width: 0;
    height: 0;
}
.ol {
    fill: none;
    stroke: #666;
    stroke-width: 2px;
    vector-effect: non-scaling-stroke;
}
.caret {
    width: 14px;
    height: 9px;
    background-color: #808080;
    clip-path: polygon(0 0, 100% 0, 50% 100%);
}
.with-caret {
    gap: 8px;
}
.m-text {
    font: bold 40px "Liberation Sans", sans-serif;
    fill: #3a6b35;
}

/* Title bar */
.title-bar {
    height: 45px;
    display: flex;
    align-items: center;
    padding: 0 39px 0 3px;
    background: linear-gradient(90deg, #f3f3f3 10%, #f4f3ee 42%, #f9f0ea 46%, #faf0e6 52%, #faf0e6 76%, #f9f0ea 85%, #f5f3ec 92%);
    font-family: "Open Sans", sans-serif;
}
.app-logo {
    width: 32px;
    height: 32px;
}
.logo-f {
    font: bold 14px "Open Sans", sans-serif;
    fill: #fff;
}
.logo-fus {
    font: bold 7px "Open Sans", sans-serif;
    fill: #fff;
}
.window-title {
    margin: 0 0 0 8px;
    font-size: 23px;
    font-weight: normal;
    color: #111;
}
.window-controls {
    margin-left: auto;
    display: flex;
    gap: 72px;
}
.window-controls svg {
    width: 20px;
    height: 20px;
}

/* Document tabs */
.tab-bar {
    height: 64px;
    display: flex;
    background-color: #d9d9d9;
    font-family: "Open Sans", sans-serif;
    font-size: 23px;
}
.quick-access {
    width: 458px;
    padding: 0 32px 0 14px;
    display: flex;
    align-items: center;
    gap: 30px;
}
.quick-access svg {
    width: 32px;
    height: 32px;
}
.quick-access .caret {
    width: 16px;
    height: 10px;
}
.faded .caret {
    background-color: #a3a3a3;
}
.history {
    display: flex;
    gap: 19px;
}
.home {
    margin-left: auto;
    padding-top: 8px;
}
.documents {
    flex: 1;
    display: flex;
    gap: 8px;
    padding-top: 8px;
}
.document {
    flex: 1;
    display: flex;
    padding-right: 13px;
    border-radius: 8px 8px 0 0;
}
.document.active {
    background-color: #f5f5f5;
}
.document-name {
    flex: 1;
    gap: 8px;
    padding-top: 4px;
}
.doc-icon {
    position: relative;
}
.doc-icon svg {
    width: 32px;
    height: 32px;
}
.doc-icon .sync {
    position: absolute;
    right: -2px;
    bottom: 0;
    width: 16px;
    height: 16px;
}
.document-close svg {
    width: 18px;
    height: 18px;
}
.new-tab {
    padding: 8px 54px 0 38px;
}
.new-tab svg {
    width: 32px;
    height: 32px;
}
.status {
    display: flex;
    align-items: center;
    gap: 38px;
    padding-right: 25px;
}
.status svg {
    width: 28px;
    height: 28px;
}
.jobs {
    width: 60px;
    justify-content: flex-start;
    gap: 6px;
}
.avatar {
    width: 50px;
    height: 50px;
    margin-left: 7px;
    border-radius: 50%;
    background-color: #fff;
}

/* Ribbon */
.ribbon {
    height: 170px;
    display: flex;
    background-color: #f5f5f5;
}
.workspace {
    width: 220px;
    margin: 21px 11px 27px 23px;
    gap: 16px;
    border: 2px solid #b6b6b6;
    border-radius: 8px;
    font-weight: bold;
}
.ribbon-tabs {
    display: flex;
    gap: 42px;
    padding-left: 23px;
}
.ribbon-tabs button {
    height: 47px;
    padding: 4px 26px 0;
    border-bottom: 6px solid transparent;
}
.ribbon-tabs .active {
    padding: 4px 24px 0;
    font-weight: bold;
    border-bottom-color: #3c3c3c;
}
.groups {
    display: flex;
    margin-top: 6px;
}
.group {
    height: 102px;
    padding: 1px 20px 0 21px;
    display: flex;
    flex-direction: column;
    align-items: center;
    gap: 12px;
    border-right: 2px solid #c8c8c8;
}
.group:first-child {
    padding-left: 20px;
}
.group:last-child {
    border-right: none;
}
.tools {
    display: flex;
    gap: 22px;
}
.tools svg {
    width: 64px;
    height: 64px;
}
.tools .parameters {
    width: 64px;
    height: 64px;
    padding-bottom: 4px;
    color: #666;
    font: italic 72px/64px "Liberation Serif", serif;
}
.tools .selected {
    margin: -8px 0;
    padding: 6px;
    background-color: #dcedf6;
    border: 2px solid #7cc4e6;
}
.group-label {
    height: 28px;
    padding: 0 8px 0 6px;
    gap: 4px;
}

/* Viewport */
.viewport {
    flex: 1;
    position: relative;
}
.model {
    position: absolute;
    top: 0;
    left: calc(50% - 180px);
    width: 290px;
}
.edge * {
    vector-effect: non-scaling-stroke;
}
.edge {
    stroke: #000;
    stroke-width: 2px;
    stroke-opacity: 0.85;
    stroke-linejoin: round;
}
.view-cube {
    position: absolute;
    top: 11px;
    right: 0;
    width: 260px;
}
.cube-face {
    font: bold 64px "Open Sans", sans-serif;
    fill: #9b9ea4;
}
.axis-z,
.axis-x {
    font: 600 92px "Open Sans", sans-serif;
}
.axis-z {
    fill: #7f7fff;
}
.axis-x {
    fill: #ff7f7f;
}
.palette {
    position: absolute;
    top: 9px;
    left: 8px;
    width: 44px;
    height: 548px;
    padding: 15px 0 25px;
    display: flex;
    flex-direction: column;
    align-items: center;
    background-color: #f3f3f3;
}
.expand svg {
    width: 16px;
    height: 12px;
}
.palette-tab {
    writing-mode: vertical-rl;
    transform: rotate(180deg);
    margin-top: auto;
    font-family: "Open Sans", sans-serif;
    font-size: 23px;
}
.nav-bar {
    position: absolute;
    bottom: 12px;
    left: 50%;
    transform: translateX(-50%);
    width: 476px;
    height: 48px;
    padding: 0 6px 4px;
    display: flex;
    align-items: center;
    justify-content: space-between;
    background-color: #f4f4f4;
}
.nav-bar svg {
    width: 32px;
    height: 32px;
}
.nav-bar .caret {
    width: 12px;
    height: 8px;
}
.nav-bar .plain {
    margin: 0 5px;
}
.assistant {
    position: absolute;
    right: 26px;
    bottom: 17px;
}
.assistant svg {
    width: 30px;
    height: 30px;
}

/* Timeline */
.timeline {
    height: 99px;
    display: flex;
    align-items: flex-start;
    padding: 0 26px 0 8px;
    background-color: #f5f5f5;
}
.playback {
    display: flex;
    margin: 34px 26px 0 0;
}
.playback button {
    width: 50px;
}
.playback svg,
.settings svg {
    width: 32px;
    height: 32px;
}
.track {
    position: relative;
    padding-top: 32px;
}
.features {
    margin: 0;
    padding: 0;
    display: flex;
    list-style: none;
}
.features li {
    width: 48px;
    display: flex;
    flex-direction: column;
    align-items: center;
    gap: 6px;
}
.features li::after {
    content: "";
    width: 4px;
    height: 10px;
    background-color: #c8c8c8;
}
.features svg {
    width: 32px;
    height: 32px;
}
.features .suppressed svg {
    opacity: 0.3;
}
.track-line {
    height: 4px;
    margin: 0 22px;
    background-color: #c6c6c6;
}
.playhead {
    position: absolute;
    right: -12px;
    bottom: 0;
    width: 24px;
    height: 64px;
}
.settings {
    margin: 34px 0 0 auto;
}
```
FILE: script.js
```js
// Features in the order in which they were added to the design
const start = ['t-sketch', 'extrude', 't-sketch', 'extrude', 'circ-pattern', 'move', 'move', 'rect-pattern',
    'fillet', 'combine', 'extrude', 'fillet', 'hole', 'thread', 't-chamfer', 't-chamfer'];
const end = ['t-sketch', 'extrude', 't-chamfer', 't-remove', 'hole', 't-chamfer', 't-sketch', 'extrude',
    'thread', 't-chamfer', 't-component', 't-pattern'];

const features = [...start];
for (let i = 0; i < 21; i++) {
    features.push('t-link', 't-joint');
}
features.push(...end);

const suppressedIndex = 13;
const list = document.getElementById('features');

features.forEach((name, i) => {
    const li = document.createElement('li');
    if (i === suppressedIndex) {
        li.className = 'suppressed';
    }
    li.innerHTML = `<button aria-label="${name.replace('t-', '')} ${i + 1}"><svg><use href="#${name}"/></svg></button>`;
    list.appendChild(li);
});
```
